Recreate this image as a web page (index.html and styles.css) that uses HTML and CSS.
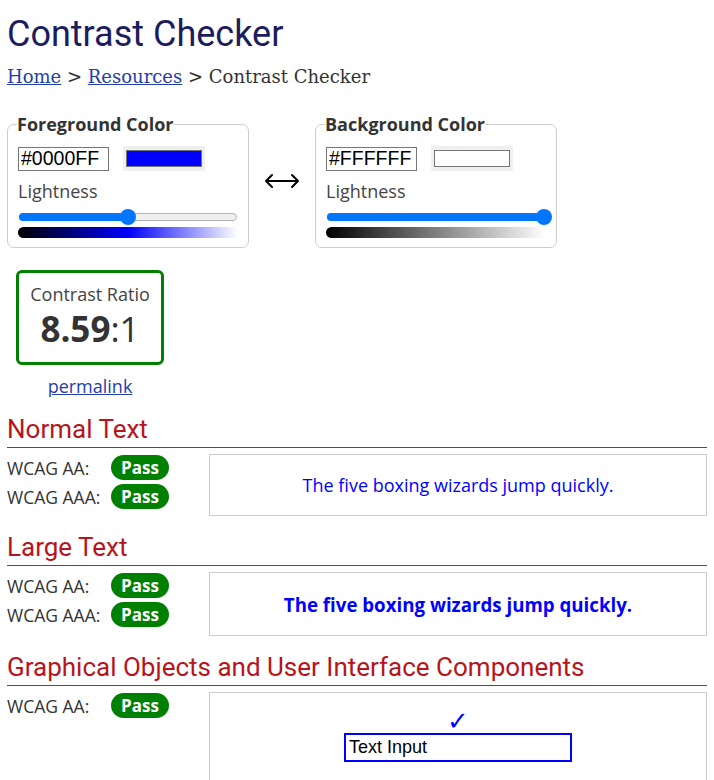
FILE: index.html
```html
<!DOCTYPE html>
<html lang="en">
<head>
<meta charset="utf-8">
<title>Contrast Checker</title>
<link rel="stylesheet" href="styles.css">
</head>
<body>
<main class="page">
  <h1 class="title">Contrast Checker</h1>
  <nav class="crumbs"><a href="#">Home</a> &gt; <a href="#">Resources</a> &gt; Contrast Checker</nav>

  <div class="pickers">
    <fieldset class="picker">
      <legend>Foreground Color</legend>
      <div class="hex-row">
        <input class="hex" type="text" value="#0000FF" aria-label="Foreground hex">
        <span class="swatch"><span class="swatch-inner swatch-blue"></span></span>
      </div>
      <div class="light-label">Lightness</div>
      <div class="slider"><span class="slider-fill" style="width:50%"></span><span class="slider-thumb" style="left:50%"></span></div>
      <div class="grad grad-blue"></div>
    </fieldset>

    <svg class="swap" width="36" height="16" viewBox="0 0 36 16" aria-label="swap colors">
      <path d="M2 8H34M8 2L2 8L8 14M28 2L34 8L28 14" fill="none" stroke="#000" stroke-width="2" stroke-linecap="round" stroke-linejoin="round"/>
    </svg>

    <fieldset class="picker">
      <legend>Background Color</legend>
      <div class="hex-row">
        <input class="hex" type="text" value="#FFFFFF" aria-label="Background hex">
        <span class="swatch"><span class="swatch-inner swatch-white"></span></span>
      </div>
      <div class="light-label">Lightness</div>
      <div class="slider"><span class="slider-fill" style="width:100%"></span><span class="slider-thumb" style="left:100%"></span></div>
      <div class="grad grad-gray"></div>
    </fieldset>
  </div>

  <div class="ratio-wrap">
    <div class="ratio">
      <div class="ratio-label">Contrast Ratio</div>
      <div class="ratio-value"><strong>8.59</strong>:1</div>
    </div>
    <a class="permalink" href="#">permalink</a>
  </div>

  <section class="result">
    <h2 class="result-title">Normal Text</h2>
    <div class="result-body">
      <div class="checks">
        <div class="check"><span class="check-label">WCAG AA:</span><span class="pass">Pass</span></div>
        <div class="check"><span class="check-label">WCAG AAA:</span><span class="pass">Pass</span></div>
      </div>
      <div class="sample sample-normal">The five boxing wizards jump quickly.</div>
    </div>
  </section>

  <section class="result">
    <h2 class="result-title">Large Text</h2>
    <div class="result-body">
      <div class="checks">
        <div class="check"><span class="check-label">WCAG AA:</span><span class="pass">Pass</span></div>
        <div class="check"><span class="check-label">WCAG AAA:</span><span class="pass">Pass</span></div>
      </div>
      <div class="sample sample-large">The five boxing wizards jump quickly.</div>
    </div>
  </section>

  <section class="result">
    <h2 class="result-title">Graphical Objects and User Interface Components</h2>
    <div class="result-body">
      <div class="checks">
        <div class="check"><span class="check-label">WCAG AA:</span><span class="pass">Pass</span></div>
      </div>
      <div class="sample sample-ui">
        <span class="tick">&#10003;</span>
        <div class="ui-input">Text Input</div>
      </div>
    </div>
  </section>
</main>
</body>
</html>
```

FILE: styles.css
```css
* { box-sizing: border-box; }

body {
  margin: 0;
  background: #fff;
  color: #333;
  font-family: "Open Sans", sans-serif;
}

.page {
  padding: 0 7px;
}

.title {
  margin: 0;
  padding-top: 13px;
  font-family: Roboto, sans-serif;
  font-weight: 400;
  font-size: 36px;
  line-height: 42px;
  color: #1c1c5e;
}

.crumbs {
  margin-top: 10px;
  font-family: "DejaVu Serif", serif;
  font-size: 18px;
  line-height: 24px;
  color: #333;
}

.crumbs a {
  color: #2340a8;
}

.pickers {
  display: flex;
  align-items: center;
  margin-top: 24px;
}

.picker {
  width: 242px;
  margin: 0;
  padding: 0 10px 9px 10px;
  border: 1px solid #ccc;
  border-radius: 7px;
}

.picker legend {
  padding: 0 1px 0 0;
  margin-left: -1px;
  font-weight: 700;
  font-size: 18px;
  line-height: 23px;
  color: #333;
}

.hex-row {
  display: flex;
  align-items: center;
  gap: 14px;
  margin-top: 10px;
}

.hex {
  width: 91px;
  height: 24px;
  margin: 0;
  padding: 1px 2px;
  border: 1px solid #767676;
  border-radius: 0;
  font-family: "Liberation Sans", Arial, sans-serif;
  font-size: 19.5px;
  color: #000;
}

.swatch {
  display: block;
  width: 82px;
  height: 25px;
  padding: 4px 3px;
  background: #efefef;
}

.swatch-inner {
  display: block;
  height: 17px;
  border: 1px solid #767676;
}

.swatch-blue { background: #0000ff; }
.swatch-white { background: #ffffff; }

.light-label {
  margin-top: 8px;
  font-size: 18px;
  line-height: 24px;
  color: #444;
}

.slider {
  position: relative;
  height: 8px;
  margin: 10px 1px 0 1px;
  background: #efefef;
  border: 1px solid #b2b2b2;
  border-radius: 4px;
}

.slider-fill {
  position: absolute;
  left: -1px;
  top: -1px;
  bottom: -1px;
  background: #0075ff;
  border-radius: 4px;
}

.slider-thumb {
  position: absolute;
  top: 50%;
  width: 16px;
  height: 16px;
  margin: -8px 0 0 -8px;
  background: #0075ff;
  border-radius: 50%;
}

.grad {
  height: 11px;
  margin-top: 6px;
  border-radius: 6px 0 0 6px;
}

.grad-blue {
  background: linear-gradient(to right, #000 0%, #0000ff 50%, #fff 100%);
}

.grad-gray {
  background: linear-gradient(to right, #000 0%, #fff 100%);
}

.swap {
  display: block;
  margin: 0 15px 0 15px;
}

.ratio-wrap {
  display: inline-flex;
  flex-direction: column;
  align-items: center;
  margin: 22px 0 0 9px;
}

.ratio {
  width: 148px;
  height: 95px;
  border: 3px solid #008000;
  border-radius: 6px;
  text-align: center;
  padding-top: 9px;
}

.ratio-label {
  font-size: 18px;
  line-height: 24px;
  color: #444;
}

.ratio-value {
  margin-top: 1px;
  font-size: 35px;
  line-height: 44px;
  color: #333;
}

.ratio-value strong {
  font-weight: 700;
}

.permalink {
  margin-top: 9px;
  font-size: 18px;
  line-height: 24px;
  color: #2340a8;
}

.result-title {
  margin: 16px 0 6px 0;
  padding-bottom: 3px;
  font-family: Roboto, sans-serif;
  font-weight: 400;
  font-size: 26px;
  line-height: 30px;
  color: #b8141c;
  border-bottom: 1px solid #a52a2a;
}

.result-body {
  display: flex;
  align-items: flex-start;
}

.checks {
  width: 202px;
  flex: none;
  display: flex;
  flex-direction: column;
  gap: 4px;
  padding-top: 1px;
}

.check {
  display: flex;
  align-items: center;
}

.check-label {
  width: 104px;
  font-size: 17.5px;
  color: #333;
}

.pass {
  display: inline-block;
  width: 58px;
  height: 25px;
  line-height: 25px;
  text-align: center;
  background: #008000;
  color: #fff;
  border-radius: 13px;
  font-weight: 700;
  font-size: 17px;
}

.sample {
  flex: 1;
  border: 1px solid #ccc;
  display: flex;
  align-items: center;
  justify-content: center;
  color: #0000ff;
}

.sample-normal {
  height: 62px;
  font-size: 18px;
}

.sample-large {
  height: 64px;
  font-size: 18.7px;
  font-weight: 700;
}

.sample-ui {
  flex-direction: column;
  justify-content: flex-start;
  padding-top: 14px;
  height: 100px;
}

.tick {
  font-family: "DejaVu Sans", sans-serif;
  font-size: 26px;
  line-height: 28px;
  color: #0000ff;
}

.ui-input {
  width: 228px;
  height: 29px;
  margin-top: -2px;
  padding: 0 3px;
  border: 2px solid #0000ff;
  font-family: "Liberation Sans", Arial, sans-serif;
  font-size: 18px;
  line-height: 25px;
  color: #000;
}
```
